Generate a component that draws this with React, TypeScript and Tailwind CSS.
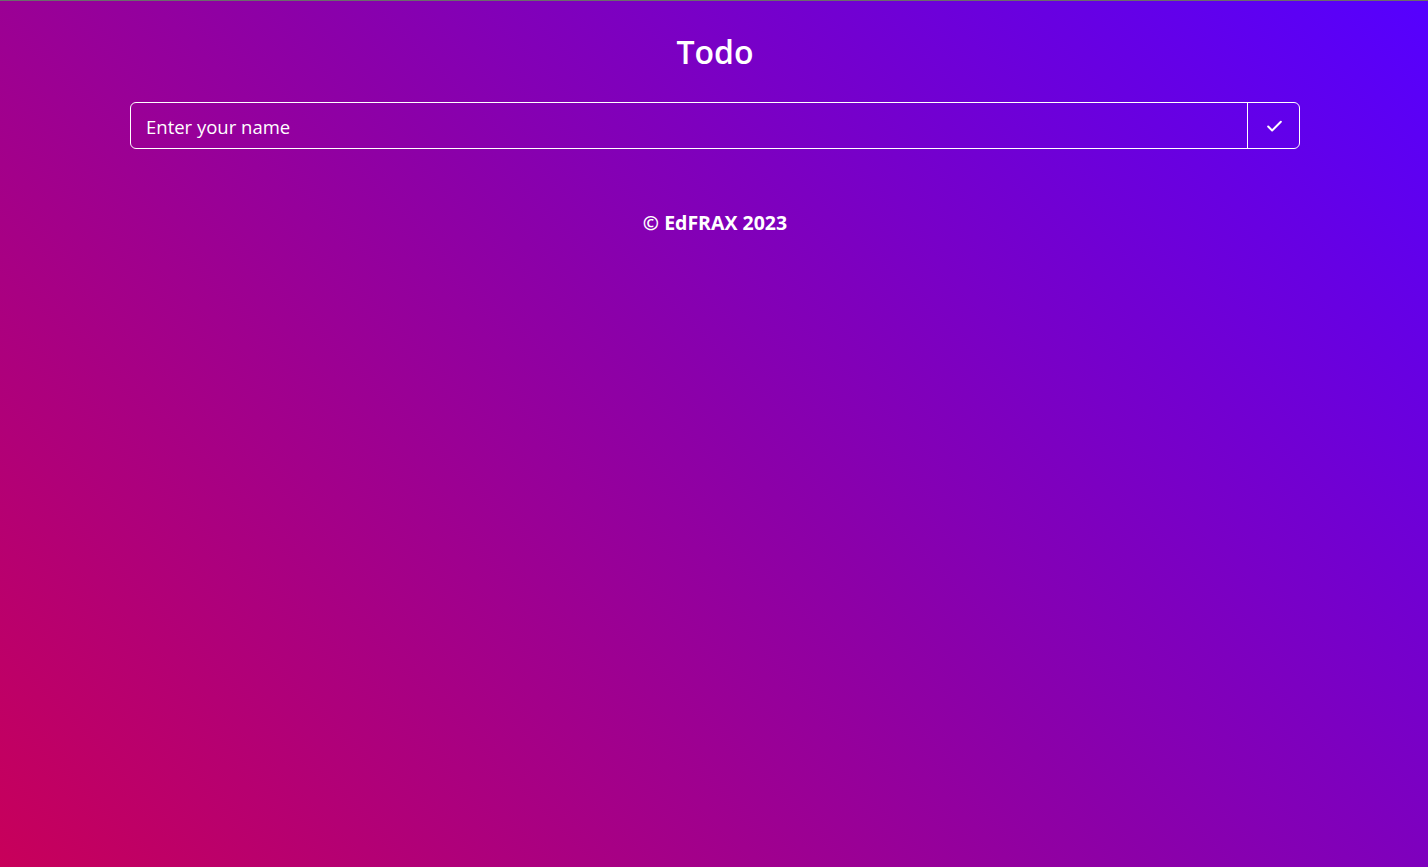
import { Check } from "lucide-react";

export default function App() {
  return (
    <div className="min-h-screen border-t border-[#6b6b6b] bg-[linear-gradient(45deg,#c8005a,#8c00a8_50%,#5500ff)] text-white font-['Open_Sans','Noto_Sans',sans-serif]">
      <div className="flex flex-col items-center pl-[130px] pr-[128px] pt-[29px]">
        <h1 className="text-[32px] leading-[44px] font-semibold">Todo</h1>
        <form
          className="mt-[28px] flex h-[47px] w-full rounded-[6px] border border-white"
          onSubmit={(e) => e.preventDefault()}
        >
          <input
            className="flex-1 bg-transparent px-[15px] pt-[3px] text-[18.5px] text-white placeholder:text-white outline-none"
            placeholder="Enter your name"
          />
          <button
            type="submit"
            className="flex w-[52px] items-center justify-center border-l border-white pl-[2px] pt-[2px]"
          >
            <Check size={19} strokeWidth={2.5} />
          </button>
        </form>
        <p className="mt-[59px] text-[19.5px] font-bold">© EdFRAX 2023</p>
      </div>
    </div>
  );
}
